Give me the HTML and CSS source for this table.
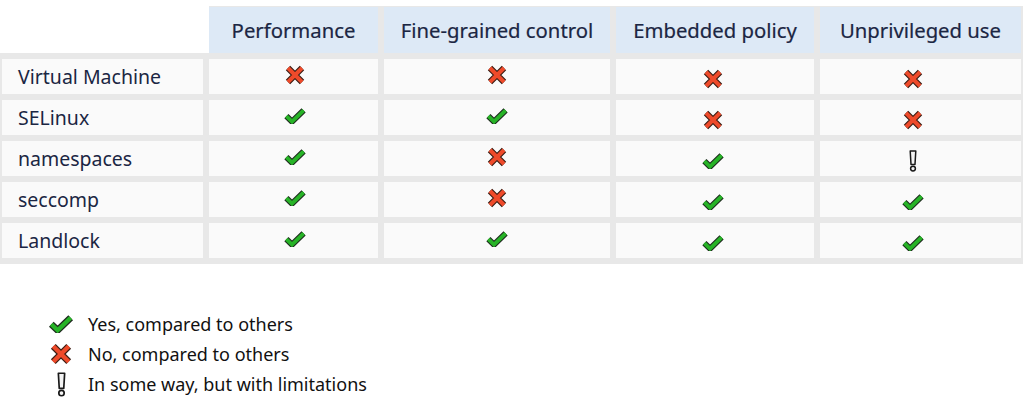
FILE: index.html
```html
<!DOCTYPE html>
<html lang="en">
<head>
<meta charset="utf-8">
<title>Sandboxing comparison</title>
<link rel="stylesheet" href="styles.css">
</head>
<body>
<svg class="defs" width="0" height="0" aria-hidden="true">
  <defs>
    <symbol id="yes" viewBox="0 0 22 16">
      <polyline points="2.4,8.2 8,13.6 19.6,2.4" fill="none" stroke="#1f2b1f" stroke-width="6"/>
      <polyline points="2.4,8.2 8,13.6 19.6,2.4" fill="none" stroke="#27b327" stroke-width="3.8"/>
    </symbol>
    <symbol id="no" viewBox="0 0 20 20">
      <path d="M3 3 L17 17 M17 3 L3 17" fill="none" stroke="#3a1d14" stroke-width="6.2"/>
      <path d="M3 3 L17 17 M17 3 L3 17" fill="none" stroke="#ee4a2a" stroke-width="4"/>
    </symbol>
    <symbol id="some" viewBox="0 0 8 22">
      <path d="M1.2 1 H6.8 L6 14.4 H2 Z" fill="#f4f4f4" stroke="#1a1a1a" stroke-width="1.5" stroke-linejoin="round"/>
      <circle cx="4" cy="18.6" r="2.4" fill="#f4f4f4" stroke="#1a1a1a" stroke-width="1.5"/>
    </symbol>
  </defs>
</svg>

<div class="matrix">
  <div class="corner"></div>
  <div class="head">Performance</div>
  <div class="head">Fine-grained control</div>
  <div class="head">Embedded policy</div>
  <div class="head">Unprivileged use</div>

  <div class="label">Virtual Machine</div>
  <div class="cell c1"><svg class="ico no"><use href="#no"/></svg></div>
  <div class="cell c2"><svg class="ico no"><use href="#no"/></svg></div>
  <div class="cell c3"><svg class="ico no"><use href="#no"/></svg></div>
  <div class="cell c4"><svg class="ico no"><use href="#no"/></svg></div>

  <div class="label">SELinux</div>
  <div class="cell c1"><svg class="ico yes"><use href="#yes"/></svg></div>
  <div class="cell c2"><svg class="ico yes"><use href="#yes"/></svg></div>
  <div class="cell c3"><svg class="ico no"><use href="#no"/></svg></div>
  <div class="cell c4"><svg class="ico no"><use href="#no"/></svg></div>

  <div class="label">namespaces</div>
  <div class="cell c1"><svg class="ico yes"><use href="#yes"/></svg></div>
  <div class="cell c2"><svg class="ico no"><use href="#no"/></svg></div>
  <div class="cell c3"><svg class="ico yes"><use href="#yes"/></svg></div>
  <div class="cell c4"><svg class="ico some"><use href="#some"/></svg></div>

  <div class="label">seccomp</div>
  <div class="cell c1"><svg class="ico yes"><use href="#yes"/></svg></div>
  <div class="cell c2"><svg class="ico no"><use href="#no"/></svg></div>
  <div class="cell c3"><svg class="ico yes"><use href="#yes"/></svg></div>
  <div class="cell c4"><svg class="ico yes"><use href="#yes"/></svg></div>

  <div class="label">Landlock</div>
  <div class="cell c1"><svg class="ico yes"><use href="#yes"/></svg></div>
  <div class="cell c2"><svg class="ico yes"><use href="#yes"/></svg></div>
  <div class="cell c3"><svg class="ico yes"><use href="#yes"/></svg></div>
  <div class="cell c4"><svg class="ico yes"><use href="#yes"/></svg></div>
</div>

<ul class="legend">
  <li class="legend-row"><span class="legend-ico"><svg class="lg-yes"><use href="#yes"/></svg></span><span class="legend-text">Yes, compared to others</span></li>
  <li class="legend-row"><span class="legend-ico"><svg class="lg-no"><use href="#no"/></svg></span><span class="legend-text">No, compared to others</span></li>
  <li class="legend-row"><span class="legend-ico"><svg class="lg-some"><use href="#some"/></svg></span><span class="legend-text">In some way, but with limitations</span></li>
</ul>
</body>
</html>
```

FILE: styles.css
```css
html, body {
  margin: 0;
  padding: 0;
  background: #ffffff;
}

body {
  width: 1024px;
  height: 401px;
  overflow: hidden;
  font-family: "Noto Sans", "Open Sans", sans-serif;
}

.defs {
  position: absolute;
  width: 0;
  height: 0;
}

.matrix {
  margin-top: 6px;
  width: 1023px;
  box-sizing: border-box;
  display: grid;
  grid-template-columns: 201px 169px 226px 198px 201px;
  grid-template-rows: 46px repeat(5, 35px);
  gap: 6px;
  padding: 1px 2px 6px 2px;
  background: #e8e8e8;
}

.corner {
  background: #ffffff;
  margin: -7px -6px 0 -2px;
}

.head {
  background: #dde9f6;
  color: #1b2643;
  font-size: 20.3px;
  display: flex;
  align-items: center;
  justify-content: center;
  -webkit-text-stroke: 0.2px #1b2643;
}

.label {
  background: #fafafa;
  color: #1b2643;
  font-size: 19.5px;
  display: flex;
  align-items: center;
  padding-left: 16px;
}

.cell {
  background: #fafafa;
  display: flex;
  align-items: center;
  justify-content: center;
}

.c1 { padding-left: 2px; }
.c1 .ico, .c2 .ico { margin-bottom: 3px; }
.c3 { padding-right: 4px; }
.c4 { padding-right: 15px; }
.c3 .ico, .c4 .ico { margin-top: 5px; }

.ico.yes { width: 22px; height: 16px; }
.ico.no { width: 20px; height: 20px; }
.ico.some { width: 8px; height: 22px; }

.legend {
  list-style: none;
  margin: 45px 0 0 48px;
  padding: 0;
  display: flex;
  flex-direction: column;
}

.legend-row {
  height: 30px;
  display: flex;
  align-items: center;
}

.legend-ico {
  width: 26px;
  display: flex;
  justify-content: center;
  align-items: center;
  margin-right: 14px;
}

.lg-yes { width: 26px; height: 18px; }
.lg-no { width: 22px; height: 22px; }
.lg-some { width: 9px; height: 25px; }

.legend-text {
  font-size: 18px;
  color: #111111;
}
```
